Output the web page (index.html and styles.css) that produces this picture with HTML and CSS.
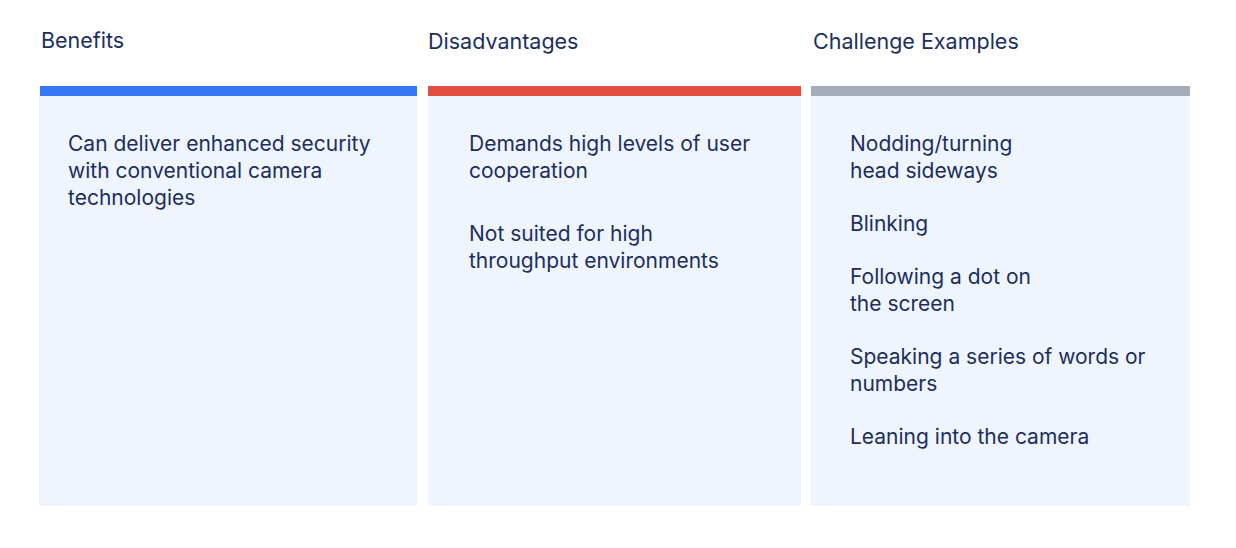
FILE: index.html
```html
<!DOCTYPE html>
<html lang="en">
<head>
<meta charset="utf-8">
<title>Liveness challenges</title>
<link rel="stylesheet" href="styles.css">
</head>
<body>
<main class="board">
  <section class="col col-benefits">
    <h2 class="col-title">Benefits</h2>
    <div class="bar bar-blue"></div>
    <div class="panel">
      <p class="item">Can deliver enhanced security<br>with conventional camera<br>technologies</p>
    </div>
  </section>
  <section class="col col-disadv">
    <h2 class="col-title">Disadvantages</h2>
    <div class="bar bar-red"></div>
    <div class="panel">
      <p class="item">Demands high levels of user<br>cooperation</p>
      <p class="item">Not suited for high<br>throughput environments</p>
    </div>
  </section>
  <section class="col col-challenge">
    <h2 class="col-title">Challenge Examples</h2>
    <div class="bar bar-gray"></div>
    <div class="panel">
      <p class="item">Nodding/turning<br>head sideways</p>
      <p class="item">Blinking</p>
      <p class="item">Following a dot on<br>the screen</p>
      <p class="item">Speaking a series of words or<br>numbers</p>
      <p class="item">Leaning into the camera</p>
    </div>
  </section>
</main>
</body>
</html>
```

FILE: styles.css
```css
html, body {
  margin: 0;
  padding: 0;
  background: #ffffff;
}

body {
  font-family: "Inter", "Roboto", "Liberation Sans", sans-serif;
  color: #1b2f5e;
}

.board {
  display: grid;
  grid-template-columns: 379px 373px 379px;
  column-gap: 10px;
  padding: 27px 0 0 39px;
  height: 479px;
}

.col {
  display: flex;
  flex-direction: column;
}

.col-title {
  margin: 0 0 32px;
  font-size: 21.5px;
  line-height: 27px;
  font-weight: 400;
  padding-left: 2px;
}

.col-disadv .col-title {
  padding-left: 0;
  margin-top: 1px;
  margin-bottom: 31px;
}

.col-challenge .col-title {
  padding-left: 2px;
  margin-top: 1px;
  margin-bottom: 31px;
}

.bar {
  height: 10px;
}

.bar-blue { background: #3478f6; margin-left: 1px; margin-right: 1px; }
.bar-red { background: #e34e42; }
.bar-gray { background: #a2adb8; }

.panel {
  flex: 1;
  background: #eff4fd;
  padding: 34px 20px 0 29px;
}

.col-benefits .panel { margin-right: 1px; }
.col-disadv .panel { padding-left: 41px; }
.col-challenge .panel { padding-left: 39px; }

.item {
  margin: 0;
  font-size: 21px;
  line-height: 27px;
}

.col-disadv .item + .item { margin-top: 36px; }
.col-challenge .item + .item { margin-top: 26px; }
```
